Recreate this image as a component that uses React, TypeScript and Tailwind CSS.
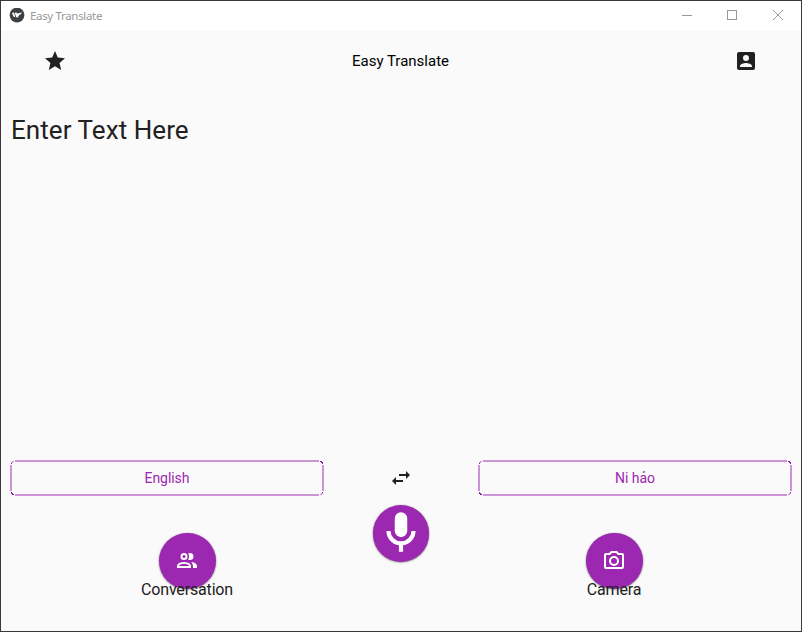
import React from "react";

const glyphs = {
  star: "M12,17.27L18.18,21L16.54,13.97L22,9.24L14.81,8.62L12,2L9.19,8.62L2,9.24L7.45,13.97L5.82,21L12,17.27Z",
  accountBox:
    "M6,17C6,15 10,13.9 12,13.9C14,13.9 18,15 18,17V18H6M15,9A3,3 0 0,1 12,12A3,3 0 0,1 9,9A3,3 0 0,1 12,6A3,3 0 0,1 15,9M3,5V19A2,2 0 0,0 5,21H19A2,2 0 0,0 21,19V5A2,2 0 0,0 19,3H5C3.89,3 3,3.9 3,5Z",
  swap: "M21,9L17,5V8H10V10H17V13M7,11L3,15L7,19V16H14V14H7V11Z",
  microphone:
    "M12,2A3,3 0 0,1 15,5V11A3,3 0 0,1 12,14A3,3 0 0,1 9,11V5A3,3 0 0,1 12,2M19,11C19,14.53 16.39,17.44 13,17.93V21H11V17.93C7.61,17.44 5,14.53 5,11H7A5,5 0 0,0 12,16A5,5 0 0,0 17,11H19Z",
  people:
    "M13.07 10.41A5 5 0 0 0 13.07 4.59A3.39 3.39 0 0 1 15 4A3.5 3.5 0 0 1 15 11A3.39 3.39 0 0 1 13.07 10.41M5.5 7.5A3.5 3.5 0 1 1 9 11A3.5 3.5 0 0 1 5.5 7.5M7.5 7.5A1.5 1.5 0 1 0 9 6A1.5 1.5 0 0 0 7.5 7.5M16 17V19H2V17S2 13 9 13 16 17 16 17M14 17C13.86 16.22 12.67 15 9 15S4.07 16.31 4 17M15.95 13A5.32 5.32 0 0 1 18 17V19H22V17S22 13.37 15.94 13Z",
  camera:
    "M20,4H16.83L15,2H9L7.17,4H4A2,2 0 0,0 2,6V18A2,2 0 0,0 4,20H20A2,2 0 0,0 22,18V6A2,2 0 0,0 20,4M20,18H4V6H8.05L9.88,4H14.12L15.95,6H20V18M12,7A5,5 0 0,0 7,12A5,5 0 0,0 12,17A5,5 0 0,0 17,12A5,5 0 0,0 12,7M12,15A3,3 0 0,1 9,12A3,3 0 0,1 12,9A3,3 0 0,1 15,12A3,3 0 0,1 12,15Z",
};

function Icon({ name, className = "size-6" }: { name: keyof typeof glyphs; className?: string }) {
  return (
    <svg viewBox="0 0 24 24" fill="currentColor" className={`shrink-0 ${className}`} aria-hidden="true">
      <path d={glyphs[name]} />
    </svg>
  );
}

function TitleBar() {
  return (
    <header className="flex h-[30px] shrink-0 items-center bg-white text-[#999999]">
      <svg viewBox="0 0 16 16" className="ml-2 size-4" aria-hidden="true">
        <circle cx="8" cy="7" r="7.4" fill="#3f4045" />
        <path d="M2.9 4.9L4.9 4.5L6.3 8.7L4.8 9ZM5.6 4.7L7.3 4.5L8.9 6.9L7.4 9.5ZM8 5.6L13.2 4.4L11.4 6.6L10.4 6.7L8.6 9.7L7.6 9.1Z" fill="#fff" />
      </svg>
      <span className="ml-[5px] flex-1 font-['Noto_Sans',sans-serif] text-[11.5px] leading-4 tracking-[-0.33px]">
        Easy Translate
      </span>
      <div className="mr-4 flex h-full gap-[34px]">
        <svg viewBox="0 0 12 30" className="h-[30px] w-3" fill="none" stroke="currentColor" shapeRendering="crispEdges">
          <path d="M1 14.5H11" />
        </svg>
        <svg viewBox="0 0 12 30" className="h-[30px] w-3" fill="none" stroke="currentColor" shapeRendering="crispEdges">
          <path d="M.5 9.5H9.5V18.5H.5Z" />
        </svg>
        <svg viewBox="0 0 12 30" className="h-[30px] w-3" fill="none" stroke="currentColor">
          <path d="M0 9L10 19M10 9L0 19" />
        </svg>
      </div>
    </header>
  );
}

function LanguageButton({ children }: { children: React.ReactNode }) {
  return (
    <button className="relative flex h-9 w-[314px] items-center justify-center text-sm tracking-[-0.05px] text-[#9c27b0]">
      <svg viewBox="0 0 314 36" className="absolute inset-0 h-9 w-[314px]" fill="none" shapeRendering="crispEdges">
        <g fill="#cd93d7">
          <rect x="5" y="0" width="304" height="2" />
          <rect x="5" y="34" width="304" height="2" />
          <rect x="0" y="5" width="2" height="26" />
          <rect x="312" y="5" width="2" height="26" />
        </g>
        <g stroke="#cd93d7">
          <path d="M1 2.5H3M2 1.5H4" />
          <path d="M310 34.5H312M311 33.5H313" />
        </g>
        <g stroke="#8e1ba3">
          <path d="M1 3.5H2M1 32.5H2M1 33.5H3M2 34.5H4" />
          <path d="M310 1.5H312M311 2.5H313M312 3.5H313M312 32.5H313" />
        </g>
      </svg>
      <span>{children}</span>
    </button>
  );
}

function RoundButton({ name, big = false }: { name: keyof typeof glyphs; big?: boolean }) {
  return (
    <button className="flex size-[56.5px] shrink-0 items-center justify-center rounded-full bg-[#9c27b0] text-white shadow-[0_0.5px_2px_rgba(0,0,0,0.55)]">
      <Icon name={name} className={big ? "size-[50px]" : "mr-[1.5px] size-6"} />
    </button>
  );
}

function LabelledAction({ name, label }: { name: keyof typeof glyphs; label: string }) {
  return (
    <div className="flex w-[120px] flex-col items-center pt-[36.5px]">
      <div className="pl-px">
        <RoundButton name={name} />
      </div>
      <span className="relative z-10 -mt-[9px] text-base leading-5 tracking-[-0.17px]">{label}</span>
    </div>
  );
}

export default function App() {
  return (
    <div className="flex h-[632px] w-[802px] flex-col overflow-hidden border border-[#3a383a] bg-[#fafafa] font-[Roboto,sans-serif] text-[#212121]">
      <TitleBar />
      <nav className="flex h-[60px] shrink-0 items-center justify-between pr-[43px] pl-[42px]">
        <Icon name="star" />
        <h1 className="text-[15px] leading-5 text-black">Easy Translate</h1>
        <Icon name="accountBox" />
      </nav>
      <main className="h-[369px] shrink-0 px-2.5 pt-[23px]">
        <p className="text-[26px] leading-8 tracking-[0.06px]">Enter Text Here</p>
      </main>
      <section className="flex shrink-0 items-center justify-between px-[9px]">
        <LanguageButton>English</LanguageButton>
        <Icon name="swap" />
        <LanguageButton>Ni hảo</LanguageButton>
      </section>
      <section className="flex items-start justify-between pr-[127px] pl-[126px]">
        <LabelledAction name="people" label="Conversation" />
        <div className="pt-[9px] pl-px">
          <RoundButton name="microphone" big />
        </div>
        <LabelledAction name="camera" label="Camera" />
      </section>
    </div>
  );
}
